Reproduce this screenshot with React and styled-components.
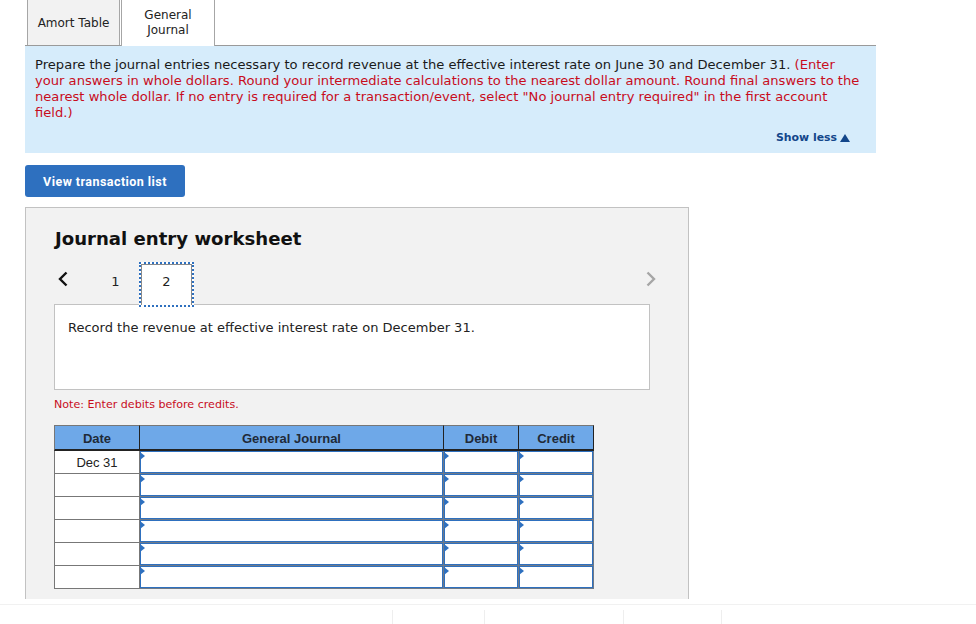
import React from 'react';
import styled, { createGlobalStyle } from 'styled-components';

const GlobalStyle = createGlobalStyle`
  html, body {
    margin: 0;
    padding: 0;
    background: #fff;
    overflow: hidden;
  }
  body {
    font-family: "DejaVu Sans", Verdana, sans-serif;
    color: #1a1a1a;
  }
`;

const Page = styled.div`
  width: 976px;
  height: 599px;
  overflow: hidden;
  box-sizing: border-box;
  padding-left: 25px;
`;

const TabBar = styled.div`
  display: flex;
  width: 851px;
  height: 46px;
  box-sizing: border-box;
  padding-left: 2px;
  border-bottom: 1px solid #9a9a9a;
`;

const Tab = styled.div`
  display: flex;
  align-items: center;
  justify-content: center;
  box-sizing: border-box;
  text-align: center;
  font-size: 12px;
  line-height: 15px;
  border-left: 1px solid #a6a6a6;
  border-right: 1px solid #a6a6a6;
  color: #222;
  width: ${p => (p.$active ? '94px' : '93px')};
  height: ${p => (p.$active ? '46px' : '45px')};
  margin-right: ${p => (p.$active ? '0' : '1px')};
  padding-top: ${p => (p.$active ? '0' : '1px')};
  background: ${p => (p.$active ? '#fff' : '#f2f2f2')};
`;

const Notice = styled.div`
  width: 851px;
  height: 107px;
  box-sizing: border-box;
  background: #d6ecfb;
  padding: 11px 10px 0 10px;
  font-size: 13.1px;
  line-height: 16px;
`;

const Red = styled.span`
  color: #c80d1d;
`;

const ShowLess = styled.div`
  display: flex;
  justify-content: flex-end;
  align-items: center;
  gap: 3px;
  margin-top: 10px;
  padding-right: 16px;
  font-size: 10.9px;
  line-height: 14px;
  font-weight: bold;
  color: #12468a;
`;

const Button = styled.button`
  display: block;
  margin-top: 12px;
  width: 160px;
  height: 32px;
  border: 0;
  border-radius: 3px;
  background: #2e70bf;
  color: #fff;
  font-family: Roboto, sans-serif;
  font-size: 12.5px;
  font-weight: 700;
  letter-spacing: 0.45px;
  padding: 0;
`;

const Worksheet = styled.div`
  margin-top: 10px;
  width: 664px;
  height: 420px;
  box-sizing: border-box;
  background: #f2f2f2;
  border: 1px solid #c2c2c2;
  padding: 20px 0 0 28px;
`;

const Title = styled.h2`
  margin: 0 0 0 1px;
  font-size: 18.1px;
  line-height: 22px;
  font-weight: bold;
  color: #111;
`;

const StepRow = styled.div`
  position: relative;
  z-index: 1;
  display: flex;
  align-items: center;
  width: 604px;
  height: 45px;
  margin-top: 12px;
  margin-bottom: -3px;
`;

const Chevron = styled.svg`
  display: block;
  flex: none;
  margin-bottom: 11px;
  margin-left: ${p => (p.$next ? 'auto' : '4px')};
  margin-right: ${p => (p.$next ? '2px' : '0')};
`;

const StepNumber = styled.div`
  box-sizing: border-box;
  display: flex;
  align-items: center;
  justify-content: center;
  font-size: 13px;
  color: #222;
  height: 45px;
  padding-bottom: 7px;
  width: ${p => (p.$current ? '55px' : '47px')};
  margin-left: ${p => (p.$current ? '0' : '24px')};
  background: ${p => (p.$current ? '#fff' : 'transparent')};
  border: ${p => (p.$current ? '2px dotted #2e70bf' : '0')};
  box-shadow: ${p => (p.$current ? 'inset 1px 1px 0 #8a8a8a, inset -1px 0 0 #8a8a8a' : 'none')};
`;

const Prompt = styled.div`
  width: 596px;
  height: 86px;
  box-sizing: border-box;
  background: #fff;
  border: 1px solid #c2c2c2;
  padding: 15px 13px;
  font-size: 13px;
  line-height: 16px;
  color: #222;
`;

const Note = styled.div`
  margin-top: 8px;
  font-size: 11.1px;
  line-height: 14px;
  color: #c80d1d;
`;

const Table = styled.div`
  margin-top: 13px;
  display: grid;
  grid-template-columns: 86px 304px 75px 75px;
  grid-template-rows: 26px;
  grid-auto-rows: 23px;
  width: 540px;
  font-family: "Liberation Sans", Arial, sans-serif;
  font-size: 13px;
`;

const HeadCell = styled.div`
  display: flex;
  align-items: center;
  justify-content: center;
  box-sizing: border-box;
  background: #6ea8e8;
  font-weight: bold;
  font-size: 13px;
  color: #1f2a38;
  padding-top: 1px;
  border-top: 1px solid #777;
  border-bottom: 2px solid #222;
  border-right: 1px solid #222;
  border-left: ${p => (p.$first ? '1px solid #777' : '0')};
`;

const DateCell = styled.div`
  display: flex;
  align-items: center;
  justify-content: center;
  box-sizing: border-box;
  background: #fff;
  border-left: 1px solid #777;
  border-right: 1px solid #777;
  border-bottom: 1px solid #777;
  color: #222;
`;

const EntryCell = styled.div`
  position: relative;
  box-sizing: border-box;
  background: #fff;
  border-right: 1px solid #6f7a88;
  border-bottom: 1px solid #6f7a88;
  box-shadow: inset 0 0 0 1px #2e70bf;
  &::before {
    content: '';
    position: absolute;
    left: 0;
    top: 1px;
    border-left: 5px solid #2e70bf;
    border-top: 4px solid transparent;
    border-bottom: 4px solid transparent;
  }
`;

const Footer = styled.div`
  position: fixed;
  left: 0;
  right: 0;
  bottom: 0;
  height: 20px;
  box-sizing: border-box;
  background: #fff;
  border-top: 1px solid #f1f1f1;
  padding-top: 5px;
  display: flex;
`;

const FooterCell = styled.div`
  height: 14px;
  width: ${p => p.$w}px;
  box-sizing: border-box;
  border-right: 1px solid #eee;
`;

const rows = ['Dec 31', '', '', '', '', ''];

export default function App() {
  return (
    <>
      <GlobalStyle />
      <Page>
        <TabBar>
          <Tab>Amort Table</Tab>
          <Tab $active>General<br />Journal</Tab>
        </TabBar>
        <Notice>
          Prepare the journal entries necessary to record revenue at the effective interest rate on June 30 and December 31.{' '}
          <Red>
            (Enter your answers in whole dollars. Round your intermediate calculations to the nearest dollar amount. Round final answers to the nearest whole dollar. If no entry is required for a transaction/event, select "No journal entry required" in the first account field.)
          </Red>
          <ShowLess>
            Show less
            <svg width="10" height="8" viewBox="0 0 10 8"><path d="M5 0l5 8H0z" fill="#12468a" /></svg>
          </ShowLess>
        </Notice>
        <Button>View transaction list</Button>
        <Worksheet>
          <Title>Journal entry worksheet</Title>
          <StepRow>
            <Chevron width="10" height="16" viewBox="0 0 10 16">
              <path d="M8.500 1.500L2 8l6.500 6.500" fill="none" stroke="#111" strokeWidth="2.400" />
            </Chevron>
            <StepNumber>1</StepNumber>
            <StepNumber $current>2</StepNumber>
            <Chevron $next width="10" height="16" viewBox="0 0 10 16">
              <path d="M1.500 1.500L8 8l-6.500 6.500" fill="none" stroke="#a6a6a6" strokeWidth="2.400" />
            </Chevron>
          </StepRow>
          <Prompt>Record the revenue at effective interest rate on December 31.</Prompt>
          <Note>Note: Enter debits before credits.</Note>
          <Table>
            <HeadCell $first>Date</HeadCell>
            <HeadCell>General Journal</HeadCell>
            <HeadCell>Debit</HeadCell>
            <HeadCell>Credit</HeadCell>
            {rows.map((date, i) => (
              <React.Fragment key={i}>
                <DateCell>{date}</DateCell>
                <EntryCell />
                <EntryCell />
                <EntryCell />
              </React.Fragment>
            ))}
          </Table>
        </Worksheet>
      </Page>
      <Footer>
        <FooterCell $w={393} />
        <FooterCell $w={92} />
        <FooterCell $w={139} />
        <FooterCell $w={98} />
      </Footer>
    </>
  );
}
